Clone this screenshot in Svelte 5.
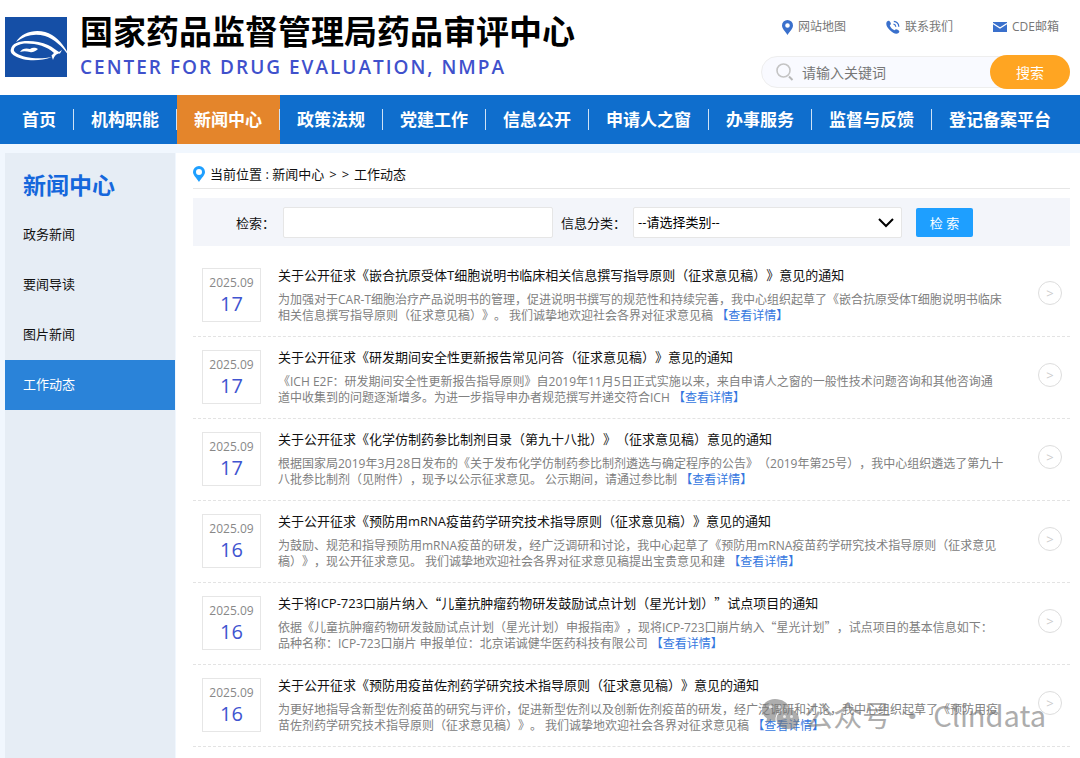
<script>
	let keyword = $state('');
	let query = $state('');
	let category = $state('');

	const navItems = [
		'首页',
		'机构职能',
		'新闻中心',
		'政策法规',
		'党建工作',
		'信息公开',
		'申请人之窗',
		'办事服务',
		'监督与反馈',
		'登记备案平台'
	];

	const sideItems = ['政务新闻', '要闻导读', '图片新闻', '工作动态'];

	const news = [
		{
			month: '2025.09',
			day: '17',
			title: '关于公开征求《嵌合抗原受体T细胞说明书临床相关信息撰写指导原则（征求意见稿）》意见的通知',
			lines: [
				'为加强对于CAR-T细胞治疗产品说明书的管理，促进说明书撰写的规范性和持续完善，我中心组织起草了《嵌合抗原受体T细胞说明书临床',
				'相关信息撰写指导原则（征求意见稿）》。 我们诚挚地欢迎社会各界对征求意见稿'
			]
		},
		{
			month: '2025.09',
			day: '17',
			title: '关于公开征求《研发期间安全性更新报告常见问答（征求意见稿）》意见的通知',
			lines: [
				'《ICH E2F：研发期间安全性更新报告指导原则》自2019年11月5日正式实施以来，来自申请人之窗的一般性技术问题咨询和其他咨询通',
				'道中收集到的问题逐渐增多。为进一步指导申办者规范撰写并递交符合ICH'
			]
		},
		{
			month: '2025.09',
			day: '17',
			title: '关于公开征求《化学仿制药参比制剂目录（第九十八批）》（征求意见稿）意见的通知',
			lines: [
				'根据国家局2019年3月28日发布的《关于发布化学仿制药参比制剂遴选与确定程序的公告》（2019年第25号），我中心组织遴选了第九十',
				'八批参比制剂（见附件），现予以公示征求意见。 公示期间，请通过参比制'
			]
		},
		{
			month: '2025.09',
			day: '16',
			title: '关于公开征求《预防用mRNA疫苗药学研究技术指导原则（征求意见稿）》意见的通知',
			lines: [
				'为鼓励、规范和指导预防用mRNA疫苗的研发，经广泛调研和讨论，我中心起草了《预防用mRNA疫苗药学研究技术指导原则（征求意见',
				'稿）》，现公开征求意见。 我们诚挚地欢迎社会各界对征求意见稿提出宝贵意见和建'
			]
		},
		{
			month: '2025.09',
			day: '16',
			title: '关于将ICP-723口崩片纳入“儿童抗肿瘤药物研发鼓励试点计划（星光计划）”试点项目的通知',
			lines: [
				'依据《儿童抗肿瘤药物研发鼓励试点计划（星光计划）申报指南》，现将ICP-723口崩片纳入“星光计划”，试点项目的基本信息如下：',
				'品种名称：ICP-723口崩片 申报单位：北京诺诚健华医药科技有限公司'
			]
		},
		{
			month: '2025.09',
			day: '16',
			title: '关于公开征求《预防用疫苗佐剂药学研究技术指导原则（征求意见稿）》意见的通知',
			lines: [
				'为更好地指导含新型佐剂疫苗的研究与评价，促进新型佐剂以及创新佐剂疫苗的研发，经广泛调研和讨论，我中心组织起草了《预防用疫',
				'苗佐剂药学研究技术指导原则（征求意见稿）》。 我们诚挚地欢迎社会各界对征求意见稿'
			]
		}
	];
</script>

<!-- Chinese quotes need the CJK face to come out full width -->
{#snippet zh(text)}
	{#each text.split(/([“”])/) as part}{#if part === '“' || part === '”'}<span class="quote">{part}</span>{:else}{part}{/if}{/each}
{/snippet}

<header class="header">
	<a class="brand" href="#home">
		<svg class="logo" viewBox="0 0 64 60" aria-hidden="true">
			<rect width="62" height="60" fill="#154fa6" />
			<path
				d="M11 25C18 13 36 11 47 18C55 23 61 31 64 39C57 29 49 22 40 19C30 16 20 18 11 25Z"
				fill="#fff"
			/>
			<path
				fill-rule="evenodd"
				d="M6 32C7 22 30 22 43 28C48 30.500 51 33 54 35L57 33L55 36.500C51 36.500 49.500 39 48 43L46.500 38.500L49 36C42 29 30 26 19 26.500C9 28 6.500 33 11 36C19 41.500 35 42.500 47 40C34 45 18 44 10 39C6 37 5 34 6 32Z"
				fill="#fff"
			/>
			<path d="M15 35C17 31 22 31 25 32C28 30 31 31 33 32C31 34 27 36 25 35C21 34 18 34 15 35Z" fill="#fff" />
		</svg>
		<span class="brand-text">
			<span class="brand-cn">国家药品监督管理局药品审评中心</span>
			<span class="brand-en">CENTER FOR DRUG EVALUATION, NMPA</span>
		</span>
	</a>

	<div class="header-right">
		<div class="top-links">
			<a href="#map">
				<svg width="11" height="15" viewBox="0 0 11 15" aria-hidden="true">
					<path
						fill-rule="evenodd"
						d="M5.500 0A5.500 5.500 0 0 0 0 5.500C0 8.500 3 11 5.500 15C8 11 11 8.500 11 5.500A5.500 5.500 0 0 0 5.500 0ZM5.500 3.200A2.300 2.300 0 1 1 5.500 7.800A2.300 2.300 0 0 1 5.500 3.200Z"
						fill="#3a70cc"
					/>
				</svg>
				网站地图
			</a>
			<a href="#contact">
				<svg width="14" height="14" viewBox="0 0 14 14" aria-hidden="true">
					<path
						d="M1 1.500C2.500 0 3.500 .5 4.500 2.500C5.200 4 5 4.500 3.800 5.400C4.500 7.500 6.500 9.500 8.700 10.300C9.500 9 10.300 9 11.700 9.800C13.700 11 13.700 11.500 12.500 13C10.500 14.500 7 13.500 3.700 10C.3 6.500-.5 3.500 1 1.500Z"
						fill="#3a70cc"
					/>
					<path
						d="M7.500 4.200A2.800 2.800 0 0 1 9.800 6.700M7.800 1.300A5.600 5.600 0 0 1 12.800 6.700"
						fill="none"
						stroke="#3a70cc"
						stroke-width="1.300"
					/>
				</svg>
				联系我们
			</a>
			<a href="#mail">
				<svg width="14" height="10" viewBox="0 0 14 10" aria-hidden="true">
					<rect width="14" height="10" fill="#3a70cc" />
					<path d="M0 1.500L7 6L14 1.500" fill="none" stroke="#fff" stroke-width="1.200" />
				</svg>
				CDE邮箱
			</a>
		</div>

		<form class="site-search" onsubmit={(e) => e.preventDefault()}>
			<svg width="18" height="18" viewBox="0 0 18 18" aria-hidden="true">
				<circle cx="7.500" cy="7.500" r="6.500" fill="none" stroke="#c4c4c4" stroke-width="1.600" />
				<path d="M13 13.500L16.500 17" stroke="#b8b8b8" stroke-width="2" />
			</svg>
			<input type="text" aria-label="请输入关键词" placeholder="请输入关键词" bind:value={keyword} />
			<button type="submit">搜索</button>
		</form>
	</div>
</header>

<nav class="nav">
	{#each navItems as item}
		<a href="#nav" class:active={item === '新闻中心'}>{item}</a>
	{/each}
</nav>

<div class="page">
	<aside class="sidebar">
		<h2>新闻中心</h2>
		{#each sideItems as item}
			<a href="#side" class:active={item === '工作动态'}>{item}</a>
		{/each}
	</aside>

	<main class="content">
		<div class="breadcrumb">
			<svg width="12" height="16" viewBox="0 0 12 16" aria-hidden="true">
				<path
					fill-rule="evenodd"
					d="M6 0A6 6 0 0 0 0 6C0 9 3.500 12 6 16C8.500 12 12 9 12 6A6 6 0 0 0 6 0ZM6 3A3 3 0 1 1 6 9A3 3 0 0 1 6 3Z"
					fill="#1e9fff"
				/>
			</svg>
			<span>当前位置 : <a href="#news">新闻中心</a></span>
			<span>&gt;</span>
			<span>&gt;</span>
			<a href="#work">工作动态</a>
		</div>

		<form class="filter" onsubmit={(e) => e.preventDefault()}>
			<label for="query">检索：</label>
			<input id="query" type="text" bind:value={query} />
			<label class="category-label" for="category">信息分类：</label>
			<div class="select-wrap">
				<select id="category" bind:value={category}>
					<option value="">--请选择类别--</option>
				</select>
				<svg width="16" height="10" viewBox="0 0 16 10" aria-hidden="true">
					<path d="M1 1L8 8L15 1" fill="none" stroke="#000" stroke-width="2" />
				</svg>
			</div>
			<button type="submit">检 索</button>
		</form>

		<ul class="news">
			{#each news as item}
				<li>
					<div class="date">
						<span class="month">{item.month}</span>
						<span class="day">{item.day}</span>
					</div>
					<div class="text">
						<a class="title" href="#detail">{@render zh(item.title)}</a>
						<p>
							{@render zh(item.lines[0])}<br />
							{@render zh(item.lines[1])}
							<a class="more" href="#detail">【查看详情】</a>
						</p>
					</div>
					<a class="go" href="#detail" aria-label="查看详情">&gt;</a>
				</li>
			{/each}
		</ul>

		<div class="watermark">
			<svg width="38" height="33" viewBox="0 0 38 33" aria-hidden="true">
				<path
					d="M14 1C6.500 1 1 6 1 12C1 15.500 3 18.500 6 20.500L5 25L10 22.500C11.500 23 13 23 14.500 23C14 15 20 9.500 28 9.500C26.500 4.500 21 1 14 1Z"
					fill="#777"
				/>
				<path
					d="M27 11C20.500 11 15.500 15.500 15.500 21C15.500 26.500 20.500 31 27 31C28.500 31 30 30.700 31.300 30.300L35 32.500L34 29C36.500 27 38 24.500 38 21C38 15.500 33 11 27 11Z"
					fill="#777"
				/>
				<circle cx="9.500" cy="9" r="1.700" fill="#ddd" />
				<circle cx="18.500" cy="9" r="1.700" fill="#ddd" />
				<circle cx="23.500" cy="18.500" r="1.500" fill="#ddd" />
				<circle cx="30.500" cy="18.500" r="1.500" fill="#ddd" />
			</svg>
			<span>公众号 · Clindata</span>
		</div>
	</main>
</div>

<style>
	:global(body) {
		background: #f1f7fe;
		font-family: 'Open Sans', 'Noto Sans CJK SC', sans-serif;
		font-size: 13px;
		color: #111;
		text-spacing-trim: space-all;
	}

	a {
		color: inherit;
		text-decoration: none;
	}

	input,
	select,
	button {
		font: inherit;
		box-sizing: border-box;
	}

	svg {
		flex: none;
	}

	.quote {
		font-family: 'Noto Sans CJK SC', sans-serif;
		line-height: 1;
	}

	/* Header */
	.header {
		display: flex;
		justify-content: space-between;
		background: #fff;
		height: 95px;
		padding: 0 10px 0 5px;
		box-sizing: border-box;
	}

	.brand {
		display: flex;
		align-items: flex-start;
		gap: 11px;
	}

	.logo {
		width: 64px;
		height: 60px;
		margin-top: 17px;
	}

	.brand-text {
		display: flex;
		flex-direction: column;
		padding-top: 11px;
		white-space: nowrap;
	}

	.brand-cn {
		font-size: 33px;
		line-height: 42px;
		font-weight: bold;
		color: #000;
	}

	.brand-en {
		font-size: 19px;
		line-height: 28px;
		font-weight: 600;
		letter-spacing: 2px;
		color: #3f51cc;
	}

	.header-right {
		display: flex;
		flex-direction: column;
		align-items: flex-end;
	}

	.top-links {
		display: flex;
		gap: 40px;
		padding: 18px 11px 0 0;
		font-size: 12px;
		line-height: 18px;
		color: #777;
	}

	.top-links a {
		display: flex;
		align-items: center;
		gap: 5px;
	}

	.site-search {
		display: flex;
		align-items: center;
		width: 309px;
		height: 32px;
		margin-top: 20px;
		padding-left: 14px;
		box-sizing: border-box;
		border-radius: 17px;
		border: 1px solid #eee;
		background: #f9faff;
	}

	.site-search input {
		flex: 1;
		min-width: 0;
		border: none;
		outline: none;
		background: none;
		padding: 0 8px;
		font-size: 14px;
	}

	.site-search input::placeholder {
		color: #777;
	}

	.site-search button {
		flex: none;
		width: 80px;
		height: 34px;
		border: none;
		border-radius: 17px;
		background: #ffa522;
		color: #fff;
		font-size: 14px;
		margin-right: -1px;
	}

	/* Navigation */
	.nav {
		display: flex;
		background: #0f6ecd;
		padding-left: 5px;
	}

	.nav a {
		position: relative;
		padding: 0 18px 0 17px;
		line-height: 49px;
		font-size: 17px;
		font-weight: bold;
		color: #fff;
		white-space: nowrap;
	}

	.nav a:not(:last-child)::after {
		content: '';
		position: absolute;
		right: 0;
		top: 14px;
		width: 1px;
		height: 21px;
		background: #cfe2f5;
	}

	.nav a.active {
		background: #e4852b;
	}

	/* Page */
	.page {
		display: flex;
		min-height: calc(100vh - 153px);
		margin-top: 9px;
		padding-left: 5px;
	}

	.sidebar {
		flex: none;
		width: 170px;
		background: #e6edf5;
	}

	.sidebar h2 {
		margin: 0;
		padding: 8px 18px 0;
		font-size: 23px;
		line-height: 49px;
		color: #1567dc;
	}

	.sidebar a {
		display: block;
		padding: 0 18px 2px;
		line-height: 48px;
	}

	.sidebar a.active {
		background: #2a83d9;
		color: #fff;
	}

	.content {
		position: relative;
		flex: 1;
		min-width: 0;
		margin-left: 1px;
		padding: 0 10px 0 17px;
		background: #fff;
	}

	.breadcrumb {
		display: flex;
		align-items: center;
		gap: 5px;
		height: 36px;
		padding-top: 6px;
		box-sizing: border-box;
		border-bottom: 1px solid #e6e6e6;
	}

	.filter {
		display: flex;
		align-items: center;
		margin-top: 9px;
		height: 48px;
		padding-left: 43px;
		background: #f3f5fa;
	}

	.filter label {
		flex: none;
	}

	.filter input {
		flex: 0 1 270px;
		min-width: 0;
		height: 31px;
		margin-left: 8px;
		border: 1px solid #e6e6e6;
		border-radius: 2px;
		background: #fff;
	}

	.filter .category-label {
		margin-left: 8px;
	}

	.select-wrap {
		position: relative;
		flex: 0 1 269px;
		margin-left: 7px;
	}

	.filter select {
		display: block;
		appearance: none;
		width: 100%;
		height: 31px;
		padding: 0 4px;
		border: 1px solid #e6e6e6;
		border-radius: 2px;
		background: #fff;
		color: #000;
	}

	.select-wrap svg {
		position: absolute;
		right: 8px;
		top: 11px;
		pointer-events: none;
	}

	.filter button {
		flex: none;
		width: 57px;
		height: 29px;
		margin-left: 14px;
		padding: 0;
		border: none;
		border-radius: 2px;
		background: #1e9fff;
		color: #fff;
	}

	/* News list */
	.news {
		list-style: none;
		margin: 9px 0 0;
		padding: 0;
	}

	.news li {
		display: flex;
		align-items: flex-start;
		padding: 13px 8px 12px 9px;
		border-bottom: 1px dashed #e3e3e3;
	}

	.date {
		display: flex;
		flex-direction: column;
		align-items: center;
		width: 59px;
		height: 54px;
		padding-top: 5px;
		box-sizing: border-box;
		border: 1px solid #e6e6e6;
	}

	.month {
		font-size: 12px;
		line-height: 18px;
		color: #888;
	}

	.day {
		font-size: 20px;
		line-height: 24px;
		color: #4054d0;
	}

	.text {
		flex: 1;
		min-width: 0;
		margin-left: 17px;
		white-space: nowrap;
	}

	.title {
		display: block;
		line-height: 14px;
	}

	.text p {
		margin: 10px 0 0;
		font-size: 12px;
		line-height: 16px;
		color: #808080;
	}

	.more {
		color: #3577e0;
	}

	.go {
		width: 24px;
		height: 24px;
		margin-top: 13px;
		box-sizing: border-box;
		border: 1px solid #ddd;
		border-radius: 50%;
		text-align: center;
		line-height: 22px;
		color: #ccc;
	}

	.watermark {
		position: absolute;
		right: 34px;
		bottom: 24px;
		display: flex;
		align-items: center;
		gap: 5px;
		font-family: 'Noto Sans CJK SC', sans-serif;
		font-size: 29px;
		line-height: 40px;
		color: #777;
		opacity: 0.6;
		pointer-events: none;
		white-space: nowrap;
	}
</style>
